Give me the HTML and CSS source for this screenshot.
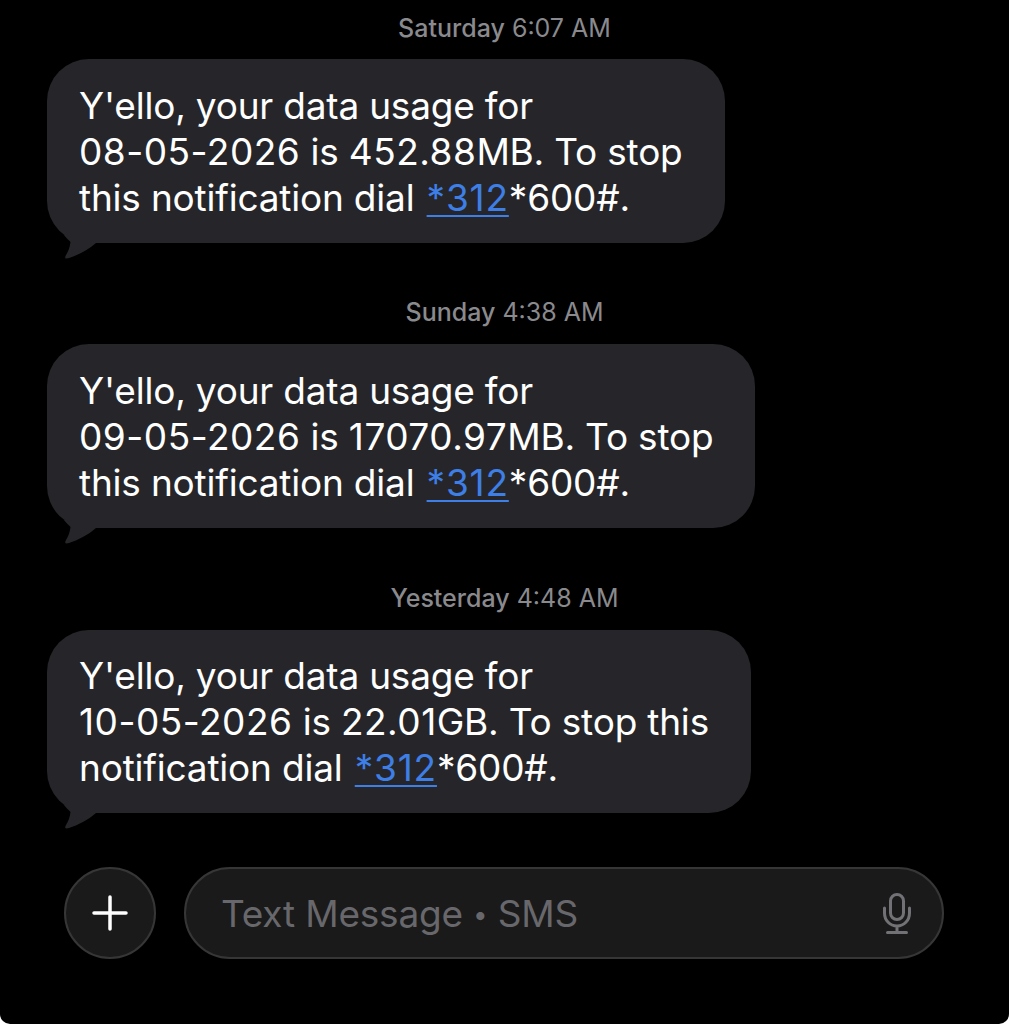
FILE: index.html
```html
<!DOCTYPE html>
<html lang="en">
<head>
    <meta charset="UTF-8">
    <meta name="viewport" content="width=device-width, initial-scale=1.0">
    <title>Messages</title>
    <link rel="stylesheet" href="styles.css">
</head>
<body>
    <div class="screen">
        <div class="thread">
            <p class="stamp stamp-first"><b>Saturday</b> 6:07 AM</p>
            <div class="bubble">
                Y'ello, your data usage for<br>
                <span class="num">08-05-2026</span> is <span class="num">452.88</span>MB. To stop<br>
                this notification dial <a href="#">*312</a>*600#.
                <svg class="tail" viewBox="0 0 32 24"><path d="M0 0C2 3 5 5 6.500 7C6 12 4 17 1.500 21C0.500 23.500 2 24 5 23C14 20 24 15 32 8L32 0Z"/></svg>
            </div>

            <p class="stamp"><b>Sunday</b> 4:38 AM</p>
            <div class="bubble">
                Y'ello, your data usage for<br>
                <span class="num">09-05-2026</span> is <span class="num">17070.97</span>MB. To stop<br>
                this notification dial <a href="#">*312</a>*600#.
                <svg class="tail" viewBox="0 0 32 24"><path d="M0 0C2 3 5 5 6.500 7C6 12 4 17 1.500 21C0.500 23.500 2 24 5 23C14 20 24 15 32 8L32 0Z"/></svg>
            </div>

            <p class="stamp"><b>Yesterday</b> 4:48 AM</p>
            <div class="bubble">
                Y'ello, your data usage for<br>
                <span class="num">10-05-2026</span> is <span class="num">22.01</span>GB. To stop this<br>
                notification dial <a href="#">*312</a>*600#.
                <svg class="tail" viewBox="0 0 32 24"><path d="M0 0C2 3 5 5 6.500 7C6 12 4 17 1.500 21C0.500 23.500 2 24 5 23C14 20 24 15 32 8L32 0Z"/></svg>
            </div>
        </div>

        <div class="composer">
            <div class="plus-btn">
                <svg viewBox="0 0 36 36"><path d="M18 2V34M2 18H34"/></svg>
            </div>
            <div class="input-box">
                <span class="placeholder">Text Message <span class="dot">•</span> SMS</span>
                <svg class="mic" viewBox="0 0 28 41">
                    <rect x="7.500" y="1.500" width="13" height="25" rx="6.500"/>
                    <path d="M1.500 15V20C1.500 27.500 7 33 14 33C21 33 26.500 27.500 26.500 20V15M14 33V39.500M4.500 39.500H23.500"/>
                </svg>
            </div>
        </div>
    </div>
</body>
</html>
```

FILE: styles.css
```css
* {
    margin: 0;
    padding: 0;
    box-sizing: border-box;
}

html, body {
    background: #fff;
}

body {
    font-family: 'Inter', 'Liberation Sans', sans-serif;
    overflow: hidden;
}

.screen {
    width: 1009px;
    height: 1024px;
    background: #000;
    border-radius: 0 0 10px 10px;
    overflow: hidden;
}

.thread {
    padding: 14px 0 0 47px;
}

.stamp {
    width: 915px;
    height: 28px;
    line-height: 28px;
    margin-top: 55.6px;
    margin-bottom: 18px;
    text-align: center;
    font-size: 25px;
    color: #8a8a8e;
}

.stamp b {
    font-weight: 500;
}

.stamp-first {
    margin-top: 0;
    margin-bottom: 17px;
}

.bubble {
    position: relative;
    width: fit-content;
    padding: 23.7px 42px 22px 32px;
    background: #26262a;
    border-radius: 42px;
    color: #fff;
    font-size: 37px;
    line-height: 46px;
    letter-spacing: -0.2px;
}

.num {
    letter-spacing: 0.5px;
}

.bubble a {
    margin-left: 2px;
    color: #3d7fe6;
    text-decoration: underline;
    text-decoration-thickness: 2px;
    text-underline-offset: 4px;
    letter-spacing: 0.8px;
}

.tail {
    position: absolute;
    left: 17px;
    bottom: -16px;
    width: 32px;
    height: 24px;
    fill: #26262a;
}

.composer {
    display: flex;
    align-items: center;
    gap: 28px;
    margin-top: 54px;
    padding-left: 64px;
}

.plus-btn {
    display: flex;
    align-items: center;
    justify-content: center;
    width: 92px;
    height: 92px;
    background: #1a1a1a;
    border: 2px solid #363636;
    border-radius: 50%;
}

.plus-btn svg {
    width: 36px;
    height: 36px;
    fill: none;
    stroke: #fff;
    stroke-width: 3.5;
    stroke-linecap: round;
}

.input-box {
    display: flex;
    align-items: center;
    justify-content: space-between;
    width: 760px;
    height: 92px;
    padding: 0 31px 0 35px;
    background: #1a1a1a;
    border: 2px solid #363636;
    border-radius: 46px;
}

.placeholder {
    color: #68686c;
    font-size: 37px;
    letter-spacing: -0.2px;
}

.dot {
    font-size: 26px;
    vertical-align: 3px;
}

.mic {
    width: 28px;
    height: 41px;
    fill: none;
    stroke: #727276;
    stroke-width: 3;
    stroke-linecap: round;
}
```
